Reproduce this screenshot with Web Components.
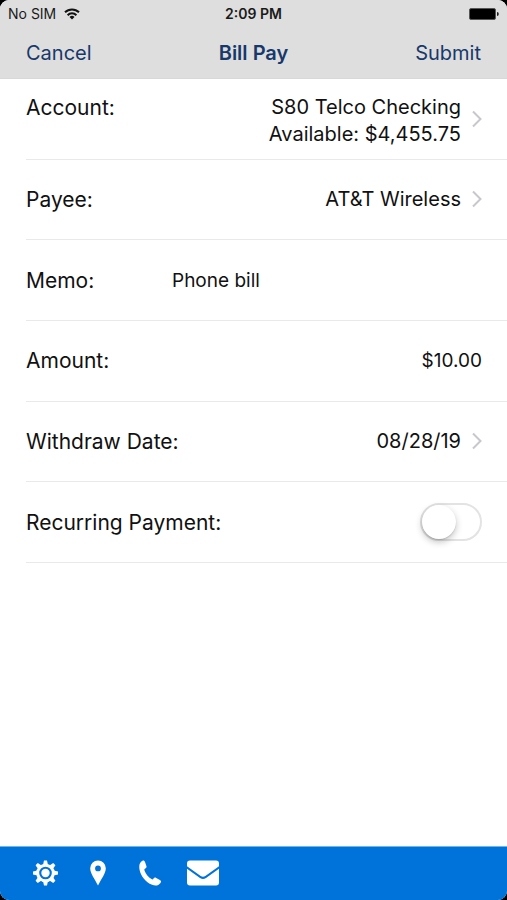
<!DOCTYPE html>
<html lang="en">
<head>
<meta charset="utf-8">
<meta name="viewport" content="width=device-width, initial-scale=1">
<title>Bill Pay</title>
<style>
  html { background: #000; }
  body { margin: 0; font-family: Inter, "Liberation Sans", sans-serif; color: #111; }
</style>
</head>
<body>
<bill-app></bill-app>

<template id="t-status">
  <style>
    :host { display: grid; grid-template-columns: 1fr auto 1fr; align-items: center; height: 27px; padding: 0 8px; font-size: 14px; color: #1a1a1a; }
    .left { display: flex; align-items: center; gap: 8px; }
    .time { font-weight: 600; }
    .battery { justify-self: end; }
    svg { display: block; }
  </style>
  <span class="left"><span>No SIM</span>
    <svg width="16" height="12" viewBox="0 0 16 12" fill="none" stroke="#111" stroke-width="2">
      <path d="M1 4.300A10 10 0 0 1 15 4.300"/><path d="M3.600 7.200A6.200 6.200 0 0 1 12.400 7.200"/>
      <path d="M5.500 9A3.600 3.600 0 0 1 10.500 9L8 11.500z" fill="#111" stroke="none"/>
    </svg>
  </span>
  <span class="time">2:09 PM</span>
  <svg class="battery" width="30" height="12" viewBox="0 0 30 12"><rect x="0.500" y="0.500" width="26" height="11" rx="1.500" fill="#000" stroke="#555" stroke-width="1"/><path d="M28 4q1.800 0 1.800 2t-1.800 2z" fill="#222"/></svg>
</template>

<template id="t-nav">
  <style>
    :host { display: grid; grid-template-columns: 1fr auto 1fr; align-items: center; height: 51px; padding: 0 26px; color: #17386b; border-bottom: 1px solid #d8d8d8; }
    h1 { margin: 0; font-size: 20px; line-height: 24px; font-weight: 600; }
    .end { justify-self: end; }
    .start { justify-self: start; }
    ::slotted(button) { border: 0; padding: 0; background: none; font: inherit; font-size: 20px; line-height: 24px; color: inherit; }
  </style>
  <span class="start"><slot name="start"></slot></span>
  <h1><slot></slot></h1>
  <span class="end"><slot name="end"></slot></span>
</template>

<template id="t-row">
  <style>
    :host { display: flex; align-items: center; box-sizing: border-box; margin-left: 26px; padding-right: 25px; border-bottom: 1px solid #e9e9eb; }
    :host([top]) .label { align-self: flex-start; padding-top: 15px; }
    .label { flex: none; font-size: 21px; line-height: 27px; }
    .value { flex: 1; min-width: 0; display: flex; justify-content: flex-end; }
    :host([fixed]) .label { width: 146px; }
  </style>
  <span class="label"><slot name="label"></slot></span>
  <span class="value"><slot></slot></span>
</template>

<template id="t-chevron">
  <style>:host { display: block; flex: none; } svg { display: block; }</style>
  <svg width="10" height="18" viewBox="0 0 10 18" fill="none" stroke="#c7c7cc" stroke-width="2"><path d="M1 1.500L8.500 9L1 16.500"/></svg>
</template>

<template id="t-form">
  <style>
    :host { display: block; }
    form { display: grid; grid-auto-rows: 1fr; min-height: 484px; margin: 0; }
    button, input { font: inherit; color: inherit; background: none; border: 0; padding: 0; margin: 0; }
    .pick { display: flex; align-items: center; gap: 11px; font-size: 20px; line-height: 27px; text-align: right; }
    .two-line { padding-top: 4px; }
    input[type=text] { width: 100%; min-width: 0; font-size: 19px; line-height: 27px; outline-offset: 4px; }
    .amount { text-align: right; }
    .switch { appearance: none; display: flex; box-sizing: border-box; width: 62px; height: 38px; border: 2px solid #e3e3e3; border-radius: 19px; background: #fff; }
    .switch::before { content: ""; width: 34px; height: 34px; border-radius: 50%; background: #fff; box-shadow: 0 3px 7px rgba(0,0,0,.24), 0 1px 1px rgba(0,0,0,.12); }
    .switch:checked { background: #4cd964; justify-content: flex-end; }
  </style>
  <form>
    <form-row top>
      <label slot="label" id="l-account" for="account">Account:</label>
      <button class="pick" type="button" id="account" aria-labelledby="l-account account"><span class="two-line">S80 Telco Checking<br>Available: $4,455.75</span><chevron-icon></chevron-icon></button>
    </form-row>
    <form-row>
      <label slot="label" id="l-payee" for="payee">Payee:</label>
      <button class="pick" type="button" id="payee" aria-labelledby="l-payee payee"><span>AT&amp;T Wireless</span><chevron-icon></chevron-icon></button>
    </form-row>
    <form-row fixed>
      <label slot="label" for="memo">Memo:</label>
      <input type="text" id="memo" value="Phone bill">
    </form-row>
    <form-row fixed>
      <label slot="label" for="amount">Amount:</label>
      <input class="amount" type="text" inputmode="decimal" id="amount" value="$10.00">
    </form-row>
    <form-row>
      <label slot="label" id="l-date" for="date">Withdraw Date:</label>
      <button class="pick" type="button" id="date" aria-labelledby="l-date date"><span>08/28/19</span><chevron-icon></chevron-icon></button>
    </form-row>
    <form-row>
      <label slot="label" for="recurring">Recurring Payment:</label>
      <input class="switch" type="checkbox" role="switch" id="recurring">
    </form-row>
  </form>
</template>

<template id="t-tabs">
  <style>
    :host { display: block; background: #0073db; border-top: 1px solid #6fb4ea; }
    nav { display: flex; align-items: center; height: 51px; padding: 0 32px 2px; gap: 22px; }
    button { border: 0; padding: 0; background: none; color: #fff; }
    svg { display: block; }
  </style>
  <nav aria-label="Main">
    <button type="button" aria-label="Settings"><svg width="27" height="26" viewBox="-13 -13 26 26"><g fill="#fff"><g id="teeth"></g></g><circle r="7.800" fill="none" stroke="#fff" stroke-width="3"/><circle r="4.200" fill="#fff"/></svg></button>
    <button type="button" aria-label="Locations"><svg width="34" height="26" viewBox="0 0 34 26"><path fill="#fff" fill-rule="evenodd" d="M17 .500a7.800 7.800 0 0 1 7.800 7.800c0 5-4.600 11-7.800 17.200C13.800 19.300 9.200 13.300 9.200 8.300A7.800 7.800 0 0 1 17 .500zm0 5a2.900 2.900 0 1 0 0 5.800 2.900 2.900 0 0 0 0-5.800z"/></svg></button>
    <button type="button" aria-label="Call"><svg width="28" height="26" viewBox="0 0 28 26"><path fill="#fff" d="M5.500.700c1.300-.5 2 0 2.600 1.500l1.300 3.700c.4 1.300-.1 2-1.200 2.600-1 .6-1 1.200-.6 2.300 1.300 3.400 3.700 6.300 6.900 8.300.9.600 1.500.4 2-.5.700-1.100 1.600-1.400 2.700-.7l3.700 2.200c1.300.8 1.500 1.600.6 2.800-2 2.600-5 3.200-8.400 1.800C8.500 22 3.700 15.800 2.500 9.400 1.800 5.400 2.600 2 5.500.700z"/></svg></button>
    <button type="button" aria-label="Messages"><svg width="32" height="26" viewBox="0 0 32 26"><path fill="#fff" d="M3 .500h26a3 3 0 0 1 3 3v2.700L18.300 16q-2.300 1.500-4.600 0L0 6.200V3.500a3 3 0 0 1 3-3z"/><path fill="#fff" d="M0 8.700L13 18q3 2 6 0L32 8.700V22.500a3 3 0 0 1-3 3H3a3 3 0 0 1-3-3z"/></svg></button>
  </nav>
</template>

<template id="t-app">
  <style>
    :host { display: flex; flex-direction: column; min-height: 100vh; overflow: hidden; border-radius: 9px; background: #fff; }
    header { background: #dedede; }
    main { flex: 1; }
  </style>
  <header>
    <status-bar></status-bar>
    <nav-bar><button slot="start" type="button">Cancel</button>Bill Pay<button slot="end" type="button">Submit</button></nav-bar>
  </header>
  <main><bill-form></bill-form></main>
  <tab-bar></tab-bar>
</template>

<script>
  class TemplateElement extends HTMLElement {
    constructor() {
      super();
      this.attachShadow({ mode: "open" });
      this.shadowRoot.append(document.getElementById(this.constructor.template).content.cloneNode(true));
    }
  }
  customElements.define("status-bar", class extends TemplateElement { static template = "t-status"; });
  customElements.define("nav-bar", class extends TemplateElement { static template = "t-nav"; });
  customElements.define("form-row", class extends TemplateElement { static template = "t-row"; });
  customElements.define("chevron-icon", class extends TemplateElement { static template = "t-chevron"; });
  customElements.define("bill-form", class extends TemplateElement { static template = "t-form"; });
  customElements.define("tab-bar", class extends TemplateElement {
    static template = "t-tabs";
    constructor() {
      super();
      const teeth = this.shadowRoot.getElementById("teeth");
      for (let angle = 0; angle < 360; angle += 45) {
        const tooth = document.createElementNS("http://www.w3.org/2000/svg", "path");
        tooth.setAttribute("d", "M-2.500 -8L-1.500 -12.500H1.500L2.500 -8z");
        tooth.setAttribute("transform", `rotate(${angle})`);
        teeth.append(tooth);
      }
    }
  });
  customElements.define("bill-app", class extends TemplateElement { static template = "t-app"; });
</script>
</body>
</html>
